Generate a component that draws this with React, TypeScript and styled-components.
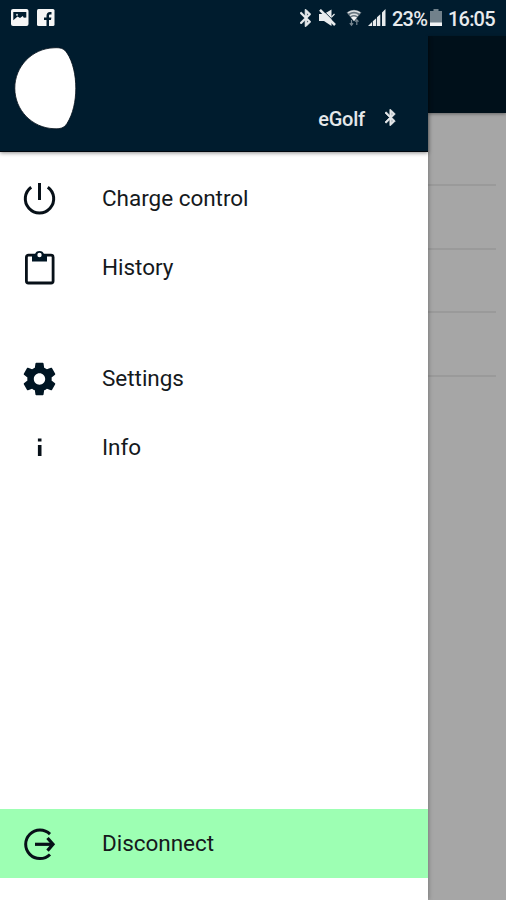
import React from "react";
import styled, { createGlobalStyle } from "styled-components";

const GlobalStyle = createGlobalStyle`
  * { box-sizing: border-box; }
  body { margin: 0; background: #a6a6a6; font-family: Roboto, "Liberation Sans", sans-serif; }
  svg { display: block; flex: none; }
`;

const Screen = styled.div`
  width: 506px;
  height: 900px;
  display: flex;
  flex-direction: column;
  overflow: hidden;
  background: #a6a6a6;
`;

const StatusBar = styled.header`
  height: 36px;
  flex: none;
  display: flex;
  align-items: center;
  padding: 0 11px 0 10.5px;
  background: #001c2e;
  color: #e8ebed;
`;

const Notifications = styled.div`
  display: flex;
  gap: 8px;
  flex: 1;
`;

const StatusText = styled.span<{ $width: number; $gap: number }>`
  width: ${(p) => p.$width}px;
  margin-left: ${(p) => p.$gap}px;
  font-size: 20px;
  line-height: 36px;
  padding-top: 2px;
  font-weight: 500;
  white-space: nowrap;
  letter-spacing: -0.8px;
`;

const StatusIcon = styled.span<{ $gap?: number }>`
  margin-left: ${(p) => p.$gap ?? 0}px;
`;

const Body = styled.div`
  display: flex;
  flex: 1;
  min-height: 0;
`;

const Drawer = styled.aside`
  width: 428px;
  flex: none;
  display: flex;
  flex-direction: column;
  background: #fff;
  position: relative;
  box-shadow: 1px 0 4px rgba(0, 0, 0, 0.25);
  clip-path: inset(0 -8px 0 0);
`;

const DrawerHeader = styled.div`
  height: 116px;
  flex: none;
  display: flex;
  justify-content: space-between;
  align-items: flex-start;
  padding: 11px 32px 0 14px;
  background: #001c2e;
  border-bottom: 1px solid #00080f;
  box-shadow: 0 1px 4px rgba(0, 0, 0, 0.45);
`;

const Vehicle = styled.div`
  display: flex;
  align-items: center;
  gap: 20.5px;
  margin-top: 60px;
  height: 24px;
  color: #e5e8ea;
  font-size: 20px;
  line-height: 24px;
  font-weight: 500;
`;

const VehicleName = styled.span`
  letter-spacing: -0.2px;
`;

const VehicleStatus = styled.span`
  margin-bottom: 3px;
`;

const Menu = styled.nav`
  display: flex;
  flex-direction: column;
  padding-top: 12px;
  flex: 1;
`;

const Group = styled.div`
  display: flex;
  flex-direction: column;
  margin-bottom: 42px;
`;

const Item = styled.a<{ $highlight?: boolean }>`
  height: 69px;
  flex: none;
  display: flex;
  align-items: center;
  gap: 43px;
  padding-left: 20px;
  color: #15191c;
  background: ${(p) => (p.$highlight ? "#9dffb3" : "transparent")};
`;

const Label = styled.span`
  font-size: 22.5px;
  font-weight: 400;
  line-height: 28px;
  margin-bottom: 2px;
  letter-spacing: -0.03px;
  white-space: nowrap;
`;

const Footer = styled.div`
  padding-bottom: 22px;
`;

const Backdrop = styled.main`
  flex: 1;
  display: flex;
  flex-direction: column;
`;

const BackdropBar = styled.div`
  height: 77px;
  flex: none;
  background: #00101a;
  box-shadow: 0 1px 3px rgba(0, 0, 0, 0.4);
`;

const BackdropRows = styled.div`
  padding: 10px 10px 0 0;
`;

const BackdropRow = styled.div`
  height: 63.4px;
  border-bottom: 2px solid #9a9a9a;
`;

const Bluetooth = ({ size }: { size: number }) => (
  <svg width={size * 0.62} height={size} viewBox="5 1.5 13 21" fill="currentColor" stroke="currentColor" strokeWidth="0.9">
    <path d="M17.71 7.71 12 2h-1v7.59L6.41 5 5 6.41 10.59 12 5 17.59 6.41 19 11 14.41V22h1l5.71-5.71-4.3-4.29 4.3-4.29zM13 5.83l1.88 1.88L13 9.59V5.83zm1.88 10.46L13 18.17v-3.76l1.88 1.88z" />
  </svg>
);

const PictureIcon = () => (
  <svg width="18" height="18" viewBox="0 0 18 18">
    <rect width="17.5" height="17" rx="2" fill="#f6f6f6" />
    <path d="M2.3 3h13v5.5l-2.5.2-1-1.7-2.8 2-2.5-1.5-4.2 3.7z" fill="#001c2e" />
    <circle cx="6" cy="5.8" r="1.1" fill="#b9c3c9" />
  </svg>
);

const FacebookIcon = () => (
  <svg width="18" height="18" viewBox="0 0 18 18">
    <rect width="17.5" height="17" rx="1.5" fill="#f6f6f6" />
    <path d="M9.5 17v-6H7V8.5h2.5V7c0-2.6 1.3-4 3.5-4h1.5v2.4h-1.1c-1 0-1.4.4-1.4 1.3v1.8h2.4l-.4 2.5h-2v6z" fill="#001c2e" />
  </svg>
);

const MutedIcon = () => (
  <svg width="17" height="18" viewBox="0 0 17 18" fill="currentColor">
    <path d="M0 5h5L12.5.5v16.5L5 12H0z" />
    <path d="M3 .3 17 14.3" stroke="#001c2e" strokeWidth="1" />
    <path d="M1 .8 16 16" stroke="currentColor" strokeWidth="2.5" />
    <path d="M12.5 8.2 15.5 5" stroke="currentColor" strokeWidth="1.2" />
  </svg>
);

const WifiIcon = () => (
  <svg width="16" height="18" viewBox="0 0 16 18">
    <path d="M.5 3.5Q8-2 15.5 3.5L8 12.5z" fill="#65747e" />
    <path d="M2 3.8Q8 0 14 3.8M4 6.7Q8 4 12 6.7" fill="none" stroke="#dce0e2" strokeWidth="1.5" />
    <path d="M5 8.4Q8 6.5 11 8.4L8 12z" fill="#f0f2f3" />
    <path d="M5.5 11v5m-1.7-1.8 1.7 2 1.6-2M10.8 16v-5m-1.6 1.7 1.6-2 1.7 2" fill="none" stroke="#778690" strokeWidth="1.2" />
  </svg>
);

const SignalIcon = () => (
  <svg width="18" height="18" viewBox="0 0 18 18" fill="currentColor">
    <path d="M0 17l4-4v4zM4.8 12.3l3.4-3V17H4.8zM9 8.2l3.3-3V17H9zM14 3.5 17.5 0v17H14z" />
  </svg>
);

const BatteryIcon = () => (
  <svg width="12" height="18" viewBox="0 0 12 18">
    <path d="M3.5 0h5v2H12v12H0V2h3.5z" fill="#71818b" />
    <path d="M0 13.5h12V17H0z" fill="#f2f4f5" />
  </svg>
);

const Logo = () => (
  <svg width="63" height="83" viewBox="0 0 63 83">
    <path d="M40 .8C46 .4 50 1.2 53 6C59 15 61.8 28 61.8 41.2S59 67 53 76.5C50 81.2 46 82 40 81.7C18 81 .8 63 .8 41.2S18 1.5 40 .8z" fill="#fff" stroke="#000d18" strokeWidth="0.8" />
  </svg>
);

const IconFrame = ({ children }: { children: React.ReactNode }) => (
  <svg width="39" height="40" viewBox="0 0 39 40" fill="none" stroke="#071018" strokeWidth="3">
    {children}
  </svg>
);

const PowerIcon = () => (
  <IconFrame>
    <path d="M19.5 4v17M11.2 8.2a14.2 14.2 0 1 0 16.6 0" />
  </IconFrame>
);

const ClipboardIcon = () => (
  <IconFrame>
    <rect x="6.4" y="7.2" width="26.7" height="27.8" rx="2" strokeWidth="2.8" />
    <path d="M12 6.5h2.9a4.8 4.8 0 0 1 9.2 0H27v7H12z" fill="#001523" stroke="none" />
    <circle cx="19.5" cy="7" r="2.2" fill="#fff" stroke="none" />
  </IconFrame>
);

const SettingsIcon = () => (
  <svg width="39" height="40" viewBox="0 0 24 24" fill="#001523">
    <path d="M19.43 12.98c.04-.32.07-.64.07-.98s-.03-.66-.07-.98l2.11-1.65c.19-.15.24-.42.12-.64l-2-3.46c-.12-.22-.39-.3-.61-.22l-2.49 1c-.52-.4-1.08-.73-1.69-.98l-.38-2.65C14.46 2.18 14.25 2 14 2h-4c-.25 0-.46.18-.49.42l-.38 2.65c-.61.25-1.17.59-1.69.98l-2.49-1c-.23-.09-.49 0-.61.22l-2 3.46c-.13.22-.07.49.12.64l2.11 1.65c-.04.32-.07.65-.07.98s.03.66.07.98l-2.11 1.65c-.19.15-.24.42-.12.64l2 3.46c.12.22.39.3.61.22l2.49-1c.52.4 1.08.73 1.69.98l.38 2.65c.03.24.24.42.49.42h4c.25 0 .46-.18.49-.42l.38-2.65c.61-.25 1.17-.59 1.69-.98l2.49 1c.23.09.49 0 .61-.22l2-3.46c.12-.22.07-.49-.12-.64l-2.11-1.65zM12 15.5c-1.93 0-3.5-1.57-3.5-3.5s1.57-3.5 3.5-3.5 3.5 1.57 3.5 3.5-1.57 3.5-3.5 3.5z" />
  </svg>
);

const InfoIcon = () => (
  <IconFrame>
    <path d="M19.7 10.4v3M19.7 17V28" strokeWidth="3.6" />
  </IconFrame>
);

const DisconnectIcon = () => (
  <IconFrame>
    <path d="M30 10.1A14.3 14.3 0 1 0 30 30.5" />
    <path d="M15 20.3h17" strokeWidth="3.2" />
    <path d="M27.5 14 33 20.3 27.5 26.6" strokeWidth="3.2" />
  </IconFrame>
);

export default function App() {
  return (
    <Screen>
      <GlobalStyle />
      <StatusBar>
        <Notifications>
          <PictureIcon />
          <FacebookIcon />
        </Notifications>
        <StatusIcon><Bluetooth size={18} /></StatusIcon>
        <StatusIcon $gap={8}><MutedIcon /></StatusIcon>
        <StatusIcon $gap={10}><WifiIcon /></StatusIcon>
        <StatusIcon $gap={6}><SignalIcon /></StatusIcon>
        <StatusText $width={34} $gap={6}>23%</StatusText>
        <StatusIcon $gap={4}><BatteryIcon /></StatusIcon>
        <StatusText $width={47} $gap={6}>16:05</StatusText>
      </StatusBar>
      <Body>
        <Drawer>
          <DrawerHeader>
            <Logo />
            <Vehicle>
              <VehicleName>eGolf</VehicleName>
              <VehicleStatus><Bluetooth size={17} /></VehicleStatus>
            </Vehicle>
          </DrawerHeader>
          <Menu>
            <Group>
              <Item><PowerIcon /><Label>Charge control</Label></Item>
              <Item><ClipboardIcon /><Label>History</Label></Item>
            </Group>
            <Group>
              <Item><SettingsIcon /><Label>Settings</Label></Item>
              <Item><InfoIcon /><Label>Info</Label></Item>
            </Group>
          </Menu>
          <Footer>
            <Item $highlight><DisconnectIcon /><Label>Disconnect</Label></Item>
          </Footer>
        </Drawer>
        <Backdrop>
          <BackdropBar />
          <BackdropRows>
            <BackdropRow />
            <BackdropRow />
            <BackdropRow />
            <BackdropRow />
          </BackdropRows>
        </Backdrop>
      </Body>
    </Screen>
  );
}
